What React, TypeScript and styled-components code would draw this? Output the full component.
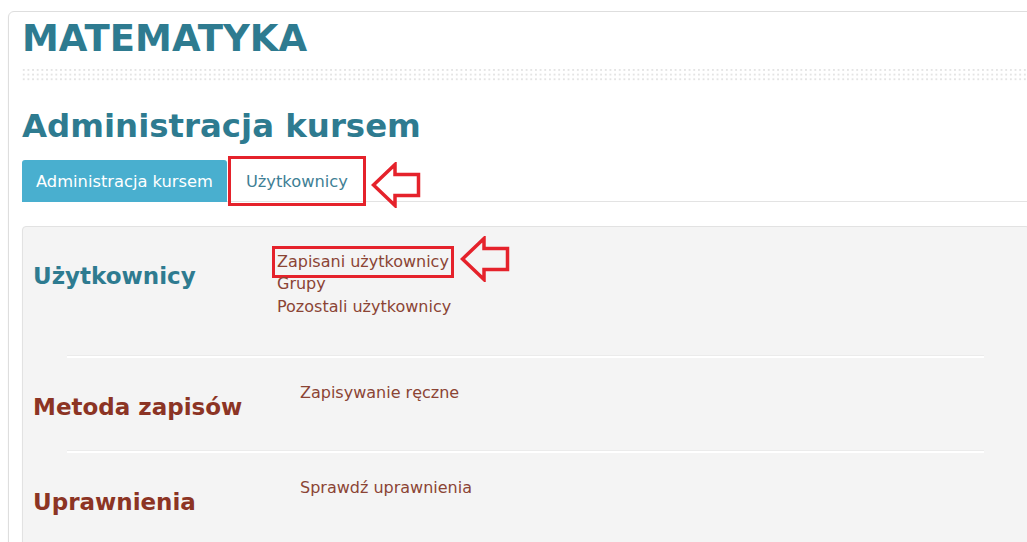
import styled, { createGlobalStyle } from "styled-components";

const GlobalStyle = createGlobalStyle`
  html, body {
    margin: 0;
    overflow: hidden;
    background: #fff;
  }
  body {
    font-family: "DejaVu Sans", Verdana, sans-serif;
  }
`;

const MARK = "#e5222b";

type Tone = "teal" | "brown";

const sections: {
  title: string;
  tone: Tone;
  indent: number;
  links: { label: string; marked?: boolean }[];
}[] = [
  {
    title: "Użytkownicy",
    tone: "teal",
    indent: 0,
    links: [
      { label: "Zapisani użytkownicy", marked: true },
      { label: "Grupy" },
      { label: "Pozostali użytkownicy" },
    ],
  },
  {
    title: "Metoda zapisów",
    tone: "brown",
    indent: 23,
    links: [{ label: "Zapisywanie ręczne" }],
  },
  {
    title: "Uprawnienia",
    tone: "brown",
    indent: 23,
    links: [{ label: "Sprawdź uprawnienia" }],
  },
];

// outlined arrow pointing left, used to call out an item
const CalloutArrow = (props: { className?: string }) => (
  <svg className={props.className} width="50" height="46" viewBox="0 0 50 46">
    <path
      d="M2.5 23 L24 2.5 L24 12.5 L47.5 12.5 L47.5 33.5 L24 33.5 L24 43.5 Z"
      fill="none"
      stroke={MARK}
      strokeWidth="3.5"
      strokeLinejoin="miter"
    />
  </svg>
);

export default function App() {
  return (
    <>
      <GlobalStyle />
      <Card>
        <CourseTitle>MATEMATYKA</CourseTitle>
        <DottedRule />
        <PageHeading>Administracja kursem</PageHeading>
        <TabBar>
          <Tab $active>Administracja kursem</Tab>
          <Tab $marked>Użytkownicy</Tab>
          <TabArrow />
        </TabBar>
        <Panel>
          {sections.map((s, i) => (
            <div key={s.title}>
              {i > 0 && <Divider />}
              <Section>
                <SectionTitle $tone={s.tone}>{s.title}</SectionTitle>
                <LinkList $indent={s.indent}>
                  {s.links.map((l) => (
                    <LinkItem key={l.label}>
                      <NavLink href="#" $marked={l.marked}>
                        {l.label}
                      </NavLink>
                      {l.marked && <LinkArrow />}
                    </LinkItem>
                  ))}
                </LinkList>
              </Section>
            </div>
          ))}
        </Panel>
      </Card>
    </>
  );
}

const Card = styled.div`
  box-sizing: border-box;
  width: 1036px;
  margin: 11px 0 0 8px;
  padding: 5px 13px 40px;
  border: 1px solid #dedede;
  border-radius: 6px;
  background: #fff;
  box-shadow: 0 1px 2px rgba(0, 0, 0, 0.05);
`;

const CourseTitle = styled.h1`
  margin: 0;
  font-size: 37px;
  line-height: 44px;
  font-weight: bold;
  color: #2e7b90;
`;

const DottedRule = styled.div`
  height: 11.5px;
  margin: 8px 0 0 -2px;
  background-image: linear-gradient(to right, #fff 2.6px, transparent 2.6px),
    linear-gradient(to bottom, #e4e4e4 2px, transparent 2px);
  background-size: 4.67px 4.67px;
`;

const PageHeading = styled.h2`
  margin: 25px 0 0;
  font-size: 32.4px;
  line-height: 40px;
  font-weight: bold;
  color: #2e7b90;
`;

const TabBar = styled.div`
  display: flex;
  align-items: flex-end;
  gap: 5px;
  margin-top: 14px;
  border-bottom: 1px solid #e3e3e3;
`;

const Tab = styled.div<{ $active?: boolean; $marked?: boolean }>`
  height: 40px;
  padding: 2px 14px 0;
  margin-bottom: -1px;
  font-size: 16.3px;
  line-height: 40px;
  white-space: nowrap;
  border-radius: ${(p) => (p.$marked ? "0" : "3px 3px 0 0")};
  background: ${(p) => (p.$active ? "#49afcf" : "transparent")};
  color: ${(p) => (p.$active ? "#fff" : "#3f7f95")};
  outline: ${(p) => (p.$marked ? `3px solid ${MARK}` : "none")};
  outline-offset: 1px;
`;

const TabArrow = styled(CalloutArrow)`
  flex: none;
  margin: 0 0 -7px 4px;
`;

const Panel = styled.div`
  margin-top: 24px;
  border: 1px solid #e2e2e2;
  border-radius: 4px;
  background: #f4f4f4;
  box-shadow: 0 1px 2px rgba(0, 0, 0, 0.04);
`;

const Section = styled.div`
  display: grid;
  grid-template-columns: 244px 1fr;
  align-items: start;
  padding: 24px 0 30px 10px;
`;

const SectionTitle = styled.h3<{ $tone: Tone }>`
  margin: 11px 0 0;
  font-size: 23px;
  line-height: 28px;
  font-weight: bold;
  color: ${(p) => (p.$tone === "teal" ? "#2e7b90" : "#8c3424")};
`;

const LinkList = styled.ul<{ $indent: number }>`
  list-style: none;
  margin: 0;
  padding: 0 0 8px ${(p) => p.$indent}px;
  font-size: 16px;
  line-height: 22.5px;
`;

const LinkItem = styled.li`
  display: flex;
  align-items: center;
`;

const NavLink = styled.a<{ $marked?: boolean }>`
  color: #8b4434;
  text-decoration: none;
  outline: ${(p) => (p.$marked ? `3px solid ${MARK}` : "none")};
  outline-offset: 2px;
`;

const LinkArrow = styled(CalloutArrow)`
  flex: none;
  margin: -15px 0 -9px 11px;
`;

const Divider = styled.div`
  height: 2px;
  margin: 0 45px 0 44px;
  background: #fff;
  box-shadow: 0 -1px 0 #ebebeb;
`;
